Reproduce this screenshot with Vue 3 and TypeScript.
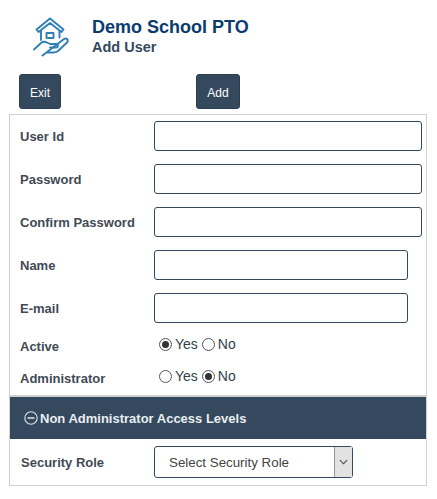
<template>
  <div class="page">
    <header class="head">
      <svg class="logo" viewBox="0 0 36 40" fill="none" stroke="#2f7fb5" stroke-width="1.9" stroke-linejoin="round" stroke-linecap="round">
        <path d="M3.5 12.5 L17 1.5 L30.5 12.5 L28.5 15 L17 6 L5.5 15 Z" />
        <path d="M8 14 V23 M26.5 14 V20.5" />
        <path d="M13.5 21 V16 H20.5 V21 H15" />
        <path d="M1 32.5 L8 26 C10 24.5 12 24.5 14 25.5 L17 27 H23 C25.5 27 25.5 30.5 23 30.5 H17" />
        <path d="M24.5 27 L31 22 C33.5 20.5 36 23 34 25.5 L25 34 C23.5 35.3 22 35.5 20 35.5 H13.5 L9.5 38.5 Z" />
      </svg>
      <div class="titles">
        <h1>Demo School PTO</h1>
        <h2>Add User</h2>
      </div>
    </header>

    <div class="actions">
      <button class="btn exit">Exit</button>
      <button class="btn">Add</button>
    </div>

    <div class="panel">
      <div class="fields">
        <div v-for="f in fields" :key="f.label" class="row">
          <label>{{ f.label }}</label>
          <input :class="{ short: f.short }" :type="f.type" />
        </div>
      </div>

      <div v-for="r in radios" :key="r.label" class="radio-row">
        <label>{{ r.label }}</label>
        <div class="radios">
          <span class="radio" :class="{ on: r.value }"></span><span class="opt">Yes</span>
          <span class="radio" :class="{ on: !r.value }"></span><span class="opt">No</span>
        </div>
      </div>

      <div class="bar">
        <svg class="minus" viewBox="0 0 14 14" fill="none" stroke="#dfe5ea" stroke-width="1.1">
          <circle cx="7" cy="7" r="6.2" />
          <path d="M3.5 7h7" stroke-width="1.5" />
        </svg>
        <span>Non Administrator Access Levels</span>
      </div>

      <div class="role">
        <label>Security Role</label>
        <div class="select">
          <span class="value">Select Security Role</span>
          <span class="arrow">
            <svg viewBox="0 0 10 6" fill="none" stroke="#444" stroke-width="1.2"><path d="M1 1l4 4 4-4" /></svg>
          </span>
        </div>
      </div>
    </div>
  </div>
</template>

<script setup lang="ts">
const fields = [
  { label: 'User Id', type: 'text', short: false },
  { label: 'Password', type: 'password', short: false },
  { label: 'Confirm Password', type: 'password', short: false },
  { label: 'Name', type: 'text', short: true },
  { label: 'E-mail', type: 'text', short: true },
];

const radios = [
  { label: 'Active', value: true },
  { label: 'Administrator', value: false },
];
</script>

<style>
body {
  background: #fff;
}
</style>

<style scoped>
.page {
  width: 437px;
  height: 499px;
  overflow: hidden;
  font-family: 'Liberation Sans', Arial, sans-serif;
  color: #333f4d;
}

.head {
  display: flex;
  align-items: flex-start;
  padding: 17px 0 0 33px;
  height: 74px;
  box-sizing: border-box;
}

.logo {
  width: 36px;
  height: 40px;
}

.titles {
  margin-left: 23px;
}

h1 {
  margin: 0;
  font-size: 18px;
  line-height: 20px;
  font-weight: 700;
  color: #0b3b6f;
}

h2 {
  margin: 0;
  font-size: 14.5px;
  line-height: 20px;
  font-weight: 700;
  color: #34495e;
}

.actions {
  display: flex;
  padding-left: 19px;
  height: 40px;
}

.btn {
  height: 35px;
  width: 44px;
  padding: 2px 0 0;
  border: 1px solid #2c3e50;
  border-radius: 3px;
  background: #34495e;
  color: #fff;
  font-family: inherit;
  font-size: 12px;
}

.exit {
  width: 42px;
  margin-right: 135px;
}

.panel {
  width: 418px;
  height: 372px;
  margin-left: 9px;
  box-sizing: border-box;
  border: 1px solid #d0d0d0;
  display: flex;
  flex-direction: column;
}

.fields {
  padding-top: 6px;
}

.row {
  display: flex;
  align-items: center;
  height: 30px;
  margin-bottom: 13px;
}

.row:last-child {
  margin-bottom: 5px;
}

label {
  font-size: 13px;
  font-weight: 700;
  color: #3f4a55;
}

.row label,
.radio-row label {
  width: 144px;
  padding-left: 10px;
  box-sizing: border-box;
}

input {
  width: 268px;
  height: 30px;
  box-sizing: border-box;
  border: 1px solid #34495e;
  border-radius: 3px;
  background: #fff;
}

input.short {
  width: 254px;
}

.radio-row {
  display: flex;
  align-items: center;
  height: 32px;
}

.radio-row label {
  padding-top: 5px;
}

.radios {
  display: flex;
  align-items: center;
  padding-left: 5px;
  font-size: 14px;
}

.radio {
  width: 13px;
  height: 13px;
  box-sizing: border-box;
  border: 1px solid #555;
  border-radius: 50%;
  position: relative;
  background: #fff;
}

.radio.on::after {
  content: '';
  position: absolute;
  left: 2px;
  top: 2px;
  width: 7px;
  height: 7px;
  border-radius: 50%;
  background: #333;
}

.opt {
  margin: 0 4px 0 3px;
}

.bar {
  display: flex;
  align-items: center;
  height: 44px;
  box-sizing: border-box;
  margin-top: 3px;
  border-top: 2px solid #d0d0d0;
  background: #34495e;
  color: #e9edf1;
  font-size: 13px;
  font-weight: 700;
  padding-left: 14px;
}

.minus {
  width: 14px;
  height: 14px;
  margin-right: 2px;
}

.role {
  display: flex;
  align-items: center;
  flex: 1;
}

.role label {
  width: 144px;
  padding-left: 11px;
  box-sizing: border-box;
}

.select {
  width: 199px;
  height: 32px;
  box-sizing: border-box;
  border: 1px solid #34495e;
  border-radius: 3px;
  display: flex;
  align-items: stretch;
  justify-content: space-between;
  font-size: 13.33px;
}

.value {
  align-self: center;
  padding-left: 14px;
  color: #444;
}

.arrow {
  width: 17px;
  background: #e2e2e2;
  border-left: 1px solid #999;
  display: flex;
  align-items: center;
  justify-content: center;
}

.arrow svg {
  width: 9px;
  height: 6px;
}
</style>
